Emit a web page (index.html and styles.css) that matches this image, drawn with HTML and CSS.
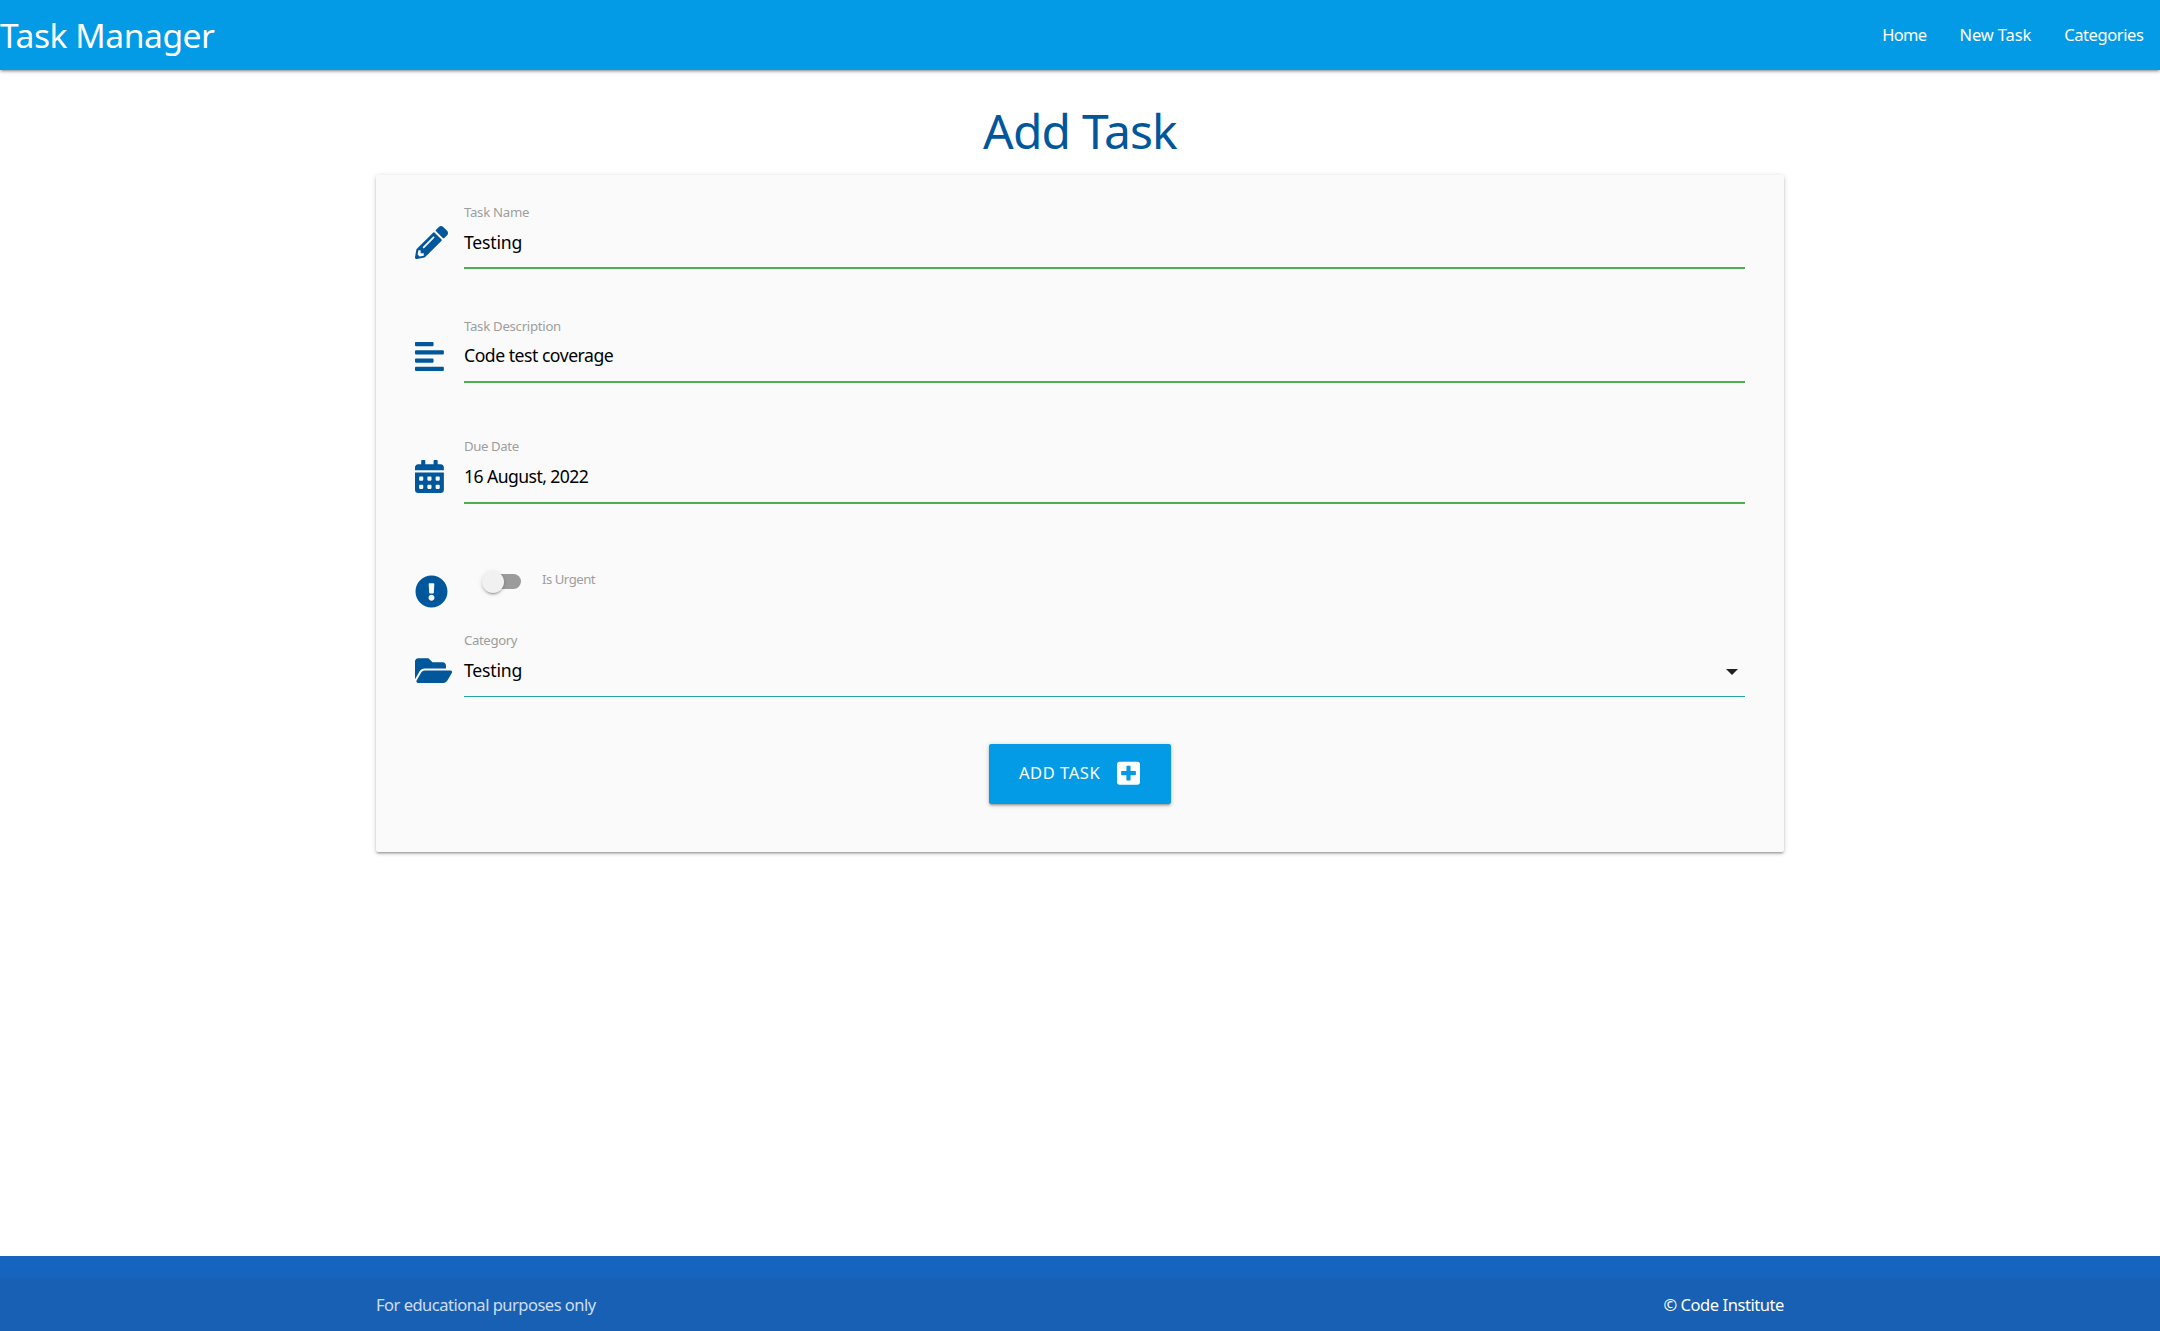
FILE: index.html
```html
<!DOCTYPE html>
<html lang="en">
<head>
<meta charset="utf-8">
<title>Task Manager</title>
<link rel="stylesheet" href="styles.css">
</head>
<body>
<nav class="navbar">
  <a class="brand">Task Manager</a>
  <div class="nav-links">
    <a class="nav-home">Home</a>
    <a class="nav-new">New Task</a>
    <a class="nav-categories">Categories</a>
  </div>
</nav>
<main class="container">
  <h1 class="title">Add Task</h1>
  <form class="card">
    <div class="field field-name">
      <svg class="icon" viewBox="0 0 512 512"><path d="M497.9 142.1l-46.1 46.1c-4.7 4.7-12.3 4.7-17 0l-111-111c-4.7-4.7-4.7-12.3 0-17l46.1-46.1c18.7-18.7 49.1-18.7 67.9 0l60.1 60.1c18.8 18.7 18.8 49.1 0 67.9zM284.2 99.8L21.6 362.4.4 483.9c-2.9 16.4 11.4 30.6 27.8 27.8l121.5-21.3 262.6-262.6c4.7-4.7 4.7-12.3 0-17l-111-111c-4.8-4.7-12.4-4.7-17.1 0zM124.1 339.9c-5.5-5.5-5.5-14.3 0-19.8l154-154c5.5-5.5 14.3-5.5 19.8 0s5.5 14.3 0 19.8l-154 154c-5.5 5.5-14.3 5.5-19.8 0zM88 424h48v36.3l-64.5 11.3-31.1-31.1L51.7 376H88v48z"/></svg>
      <div class="control">
        <label class="label">Task Name</label>
        <div class="value">Testing</div>
      </div>
    </div>
    <div class="field field-description">
      <svg class="icon" viewBox="0 0 448 512"><path d="M12.83 352h262.34A12.82 12.82 0 0 0 288 339.17v-38.34A12.82 12.82 0 0 0 275.17 288H12.83A12.82 12.82 0 0 0 0 300.83v38.34A12.82 12.82 0 0 0 12.83 352zm0-256h262.34A12.82 12.82 0 0 0 288 83.17V44.83A12.82 12.82 0 0 0 275.17 32H12.83A12.82 12.82 0 0 0 0 44.83v38.34A12.82 12.82 0 0 0 12.83 96zM432 160H16a16 16 0 0 0-16 16v32a16 16 0 0 0 16 16h416a16 16 0 0 0 16-16v-32a16 16 0 0 0-16-16zm0 256H16a16 16 0 0 0-16 16v32a16 16 0 0 0 16 16h416a16 16 0 0 0 16-16v-32a16 16 0 0 0-16-16z"/></svg>
      <div class="control">
        <label class="label">Task Description</label>
        <div class="value">Code test coverage</div>
      </div>
    </div>
    <div class="field field-date">
      <svg class="icon" viewBox="0 0 448 512"><path d="M0 464c0 26.5 21.5 48 48 48h352c26.5 0 48-21.5 48-48V192H0v272zm320-196c0-6.600 5.400-12 12-12h40c6.600 0 12 5.400 12 12v40c0 6.600-5.400 12-12 12h-40c-6.600 0-12-5.400-12-12v-40zm0 128c0-6.600 5.400-12 12-12h40c6.600 0 12 5.400 12 12v40c0 6.600-5.400 12-12 12h-40c-6.600 0-12-5.400-12-12v-40zM192 268c0-6.600 5.400-12 12-12h40c6.600 0 12 5.400 12 12v40c0 6.600-5.400 12-12 12h-40c-6.600 0-12-5.400-12-12v-40zm0 128c0-6.600 5.400-12 12-12h40c6.600 0 12 5.400 12 12v40c0 6.600-5.400 12-12 12h-40c-6.600 0-12-5.400-12-12v-40zM64 268c0-6.600 5.400-12 12-12h40c6.600 0 12 5.400 12 12v40c0 6.600-5.400 12-12 12H76c-6.600 0-12-5.400-12-12v-40zm0 128c0-6.600 5.400-12 12-12h40c6.600 0 12 5.400 12 12v40c0 6.600-5.400 12-12 12H76c-6.600 0-12-5.400-12-12v-40zM400 64h-48V16c0-8.800-7.200-16-16-16h-32c-8.800 0-16 7.200-16 16v48H160V16c0-8.800-7.200-16-16-16h-32c-8.800 0-16 7.200-16 16v48H48C21.500 64 0 85.500 0 112v48h448v-48c0-26.500-21.500-48-48-48z"/></svg>
      <div class="control">
        <label class="label">Due Date</label>
        <div class="value">16 August, 2022</div>
      </div>
    </div>
    <div class="field field-urgent">
      <svg class="icon" viewBox="0 0 512 512"><path d="M504 256c0 136.997-111.043 248-248 248S8 392.997 8 256C8 119.083 119.043 8 256 8s248 111.083 248 248zm-248 50c-25.405 0-46 20.595-46 46s20.595 46 46 46 46-20.595 46-46-20.595-46-46-46zm-43.673-165.346l7.418 136c.347 6.364 5.609 11.346 11.982 11.346h48.546c6.373 0 11.635-4.982 11.982-11.346l7.418-136c.375-6.874-5.098-12.654-11.982-12.654h-63.383c-6.884 0-12.356 5.780-11.981 12.654z"/></svg>
      <div class="switch">
        <span class="track"><span class="knob"></span></span>
        <label class="label">Is Urgent</label>
      </div>
    </div>
    <div class="field field-category">
      <svg class="icon" viewBox="0 0 576 512"><path d="M572.694 292.093L500.270 416.248A63.997 63.997 0 0 1 444.989 448H45.025c-18.523 0-30.064-20.093-20.731-36.093l72.424-124.155A64 64 0 0 1 152 256h399.964c18.523 0 30.064 20.093 20.730 36.093zM152 224h328v-48c0-26.510-21.490-48-48-48H272l-64-64H48C21.490 64 0 85.490 0 112v278.046l69.077-118.418C86.214 242.250 117.989 224 152 224z"/></svg>
      <div class="control">
        <label class="label">Category</label>
        <div class="value">Testing<svg class="caret" viewBox="0 0 12 6"><path d="M0 0h12L6 6z"/></svg></div>
      </div>
    </div>
    <button class="submit" type="button"><span>ADD TASK</span><svg class="plus" viewBox="0 0 448 512"><path d="M400 32H48C21.500 32 0 53.500 0 80v352c0 26.500 21.500 48 48 48h352c26.500 0 48-21.500 48-48V80c0-26.500-21.500-48-48-48zm-32 252c0 6.600-5.400 12-12 12h-92v92c0 6.600-5.400 12-12 12h-56c-6.600 0-12-5.400-12-12v-92H92c-6.600 0-12-5.400-12-12v-56c0-6.600 5.400-12 12-12h92v-92c0-6.600 5.400-12 12-12h56c6.600 0 12 5.400 12 12v92h92c6.600 0 12 5.400 12 12v56z"/></svg></button>
  </form>
</main>
<footer class="footer">
  <div class="copyright">
    <div class="copyright-inner"><span class="note">For educational purposes only</span><span class="owner">© Code Institute</span></div>
  </div>
</footer>
</body>
</html>
```

FILE: styles.css
```css
* { box-sizing: border-box; }

body {
  margin: 0;
  min-height: 1331px;
  display: flex;
  flex-direction: column;
  font-family: "Noto Sans", sans-serif;
  font-size: 16.5px;
  color: rgba(0, 0, 0, 0.87);
  background: #fff;
}

.navbar, .card, .submit {
  box-shadow: 0 2px 2px 0 rgba(0, 0, 0, 0.14), 0 3px 1px -2px rgba(0, 0, 0, 0.12), 0 1px 5px 0 rgba(0, 0, 0, 0.2);
}

.navbar {
  display: flex;
  justify-content: space-between;
  height: 70px;
  line-height: 70px;
  color: #fff;
  background: #039be5;
}

.brand { font-size: 33.6px; font-weight: 380; letter-spacing: -0.45px; }
.nav-links { display: flex; gap: 33px; padding-right: 16.5px; }
.nav-home { letter-spacing: -0.65px; }
.nav-new { letter-spacing: -0.12px; }
.nav-categories { letter-spacing: -0.4px; }

.container { flex: 1; width: 1408px; margin: 0 auto; }

.title {
  margin: 32px 0 15px;
  font-size: 48px;
  font-weight: 400;
  line-height: 58px;
  letter-spacing: -0.85px;
  text-align: center;
  color: #01579b;
}

.card {
  display: flex;
  flex-direction: column;
  height: 677px;
  padding: 27px 39px 0;
  border-radius: 2px;
  background: #fafafa;
}

.field { display: grid; grid-template-columns: 49px 1fr; }
.icon { height: 33px; margin-top: 24px; fill: #01579b; }
.label { display: block; font-size: 13.2px; line-height: 20px; letter-spacing: -0.28px; color: #9e9e9e; }

.value {
  display: flex;
  justify-content: space-between;
  height: 46px;
  margin-top: 1px;
  border-bottom: 2px solid #4caf50;
  font-size: 17.6px;
  line-height: 38px;
  letter-spacing: -0.2px;
  color: #000;
}

.field-description { margin-top: 47px; }
.field-description .value { line-height: 36px; letter-spacing: -0.48px; }
.field-date { margin-top: 53px; }
.field-date .label { letter-spacing: -0.4px; }
.field-date .value { height: 47px; line-height: 39px; letter-spacing: -0.57px; }

.field-urgent { height: 50px; margin-top: 56px; }
.field-urgent .icon { margin-top: 15px; }
.field-urgent .label { line-height: 30px; letter-spacing: -0.5px; }
.switch { display: flex; align-items: flex-start; gap: 21px; padding: 4px 0 0 21px; }
.track { width: 36px; height: 15px; margin-top: 10px; border-radius: 8px; background: rgba(0, 0, 0, 0.38); }

.knob {
  display: block;
  width: 22px;
  height: 22px;
  margin: -3.5px 0 0 -3px;
  border-radius: 50%;
  background: #f1f1f1;
  box-shadow: 0 3px 1px -2px rgba(0, 0, 0, 0.2), 0 2px 2px 0 rgba(0, 0, 0, 0.14), 0 1px 5px 0 rgba(0, 0, 0, 0.12);
}

.field-category { margin-top: 20px; }
.field-category .label { letter-spacing: -0.38px; }
.field-category .value { border-bottom: 1px solid #26a69a; }
.caret { width: 12px; height: 6px; margin: 18px 7px 0 0; fill: rgba(0, 0, 0, 0.87); }

.submit {
  display: flex;
  align-items: center;
  align-self: center;
  justify-content: space-between;
  width: 182px;
  height: 60px;
  margin-top: 47px;
  padding: 0 31px 0 30px;
  border: 0;
  border-radius: 2px;
  font: 400 16.5px/60px "Noto Sans", sans-serif;
  letter-spacing: 0.55px;
  color: #fff;
  background: #039be5;
}

.submit span { margin-top: -2px; }
.plus { height: 26.3px; margin-top: -2px; fill: #fff; }

.footer { height: 75px; padding-top: 22px; background: #1565c0; }
.copyright { height: 53px; line-height: 53px; background: #1760b4; }
.copyright-inner { display: flex; justify-content: space-between; width: 1408px; margin: 0 auto; }
.note { letter-spacing: -0.5px; color: rgba(255, 255, 255, 0.8); }
.owner { letter-spacing: -0.43px; color: #fff; }
```
